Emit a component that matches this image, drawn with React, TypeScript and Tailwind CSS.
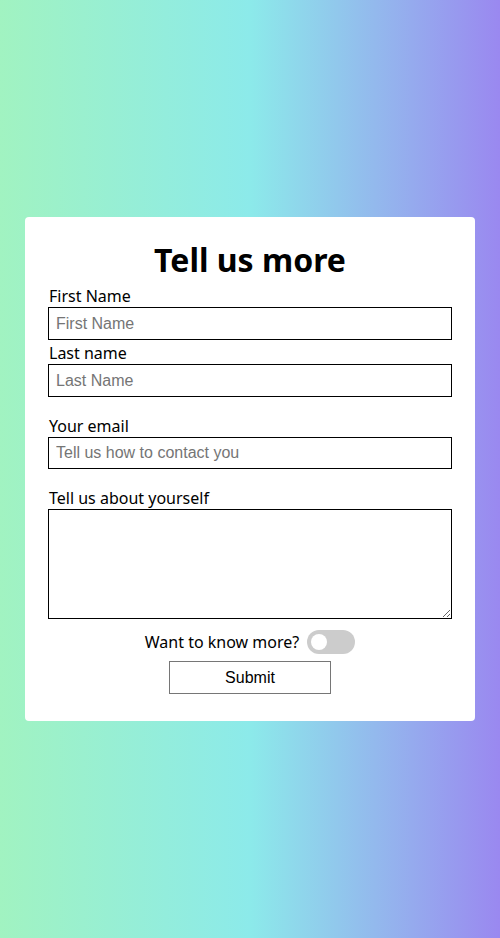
import React, { useState } from "react";

export default function App() {
  const [more, setMore] = useState(false);

  return (
    <div
      className="w-full min-h-[938px] flex items-center justify-center bg-[linear-gradient(to_right,#a1f3c1_0%,#8ceaea_50%,#9a88f0_100%)]"
      style={{ fontFamily: '"Noto Sans", sans-serif' }}
    >
      <form className="w-[450px] bg-white rounded-[4px] px-[23px] pt-[23px] pb-[27px] flex flex-col text-black">
        <h1 className="text-center text-[32px] font-bold leading-[40px] mb-[5px]">Tell us more</h1>

        {/* Name fields */}
        <label className="text-[16px] leading-[22px] pl-px">First Name</label>
        <input
          placeholder="First Name"
          className="h-[33px] border border-black px-[7px] text-[16px] placeholder:text-[#757575] font-['Liberation_Sans',Arial,sans-serif] outline-none"
        />
        <label className="text-[16px] leading-[22px] mt-[2px] pl-px">Last name</label>
        <input
          placeholder="Last Name"
          className="h-[33px] border border-black px-[7px] text-[16px] placeholder:text-[#757575] font-['Liberation_Sans',Arial,sans-serif] outline-none"
        />

        <label className="text-[16px] leading-[22px] mt-[18px] pl-px">Your email</label>
        <input
          type="email"
          placeholder="Tell us how to contact you"
          className="h-[32px] border border-black px-[7px] text-[16px] placeholder:text-[#757575] font-['Liberation_Sans',Arial,sans-serif] outline-none"
        />

        <label className="text-[16px] leading-[22px] mt-[18px] pl-px">Tell us about yourself</label>
        <textarea className="h-[110px] border border-black px-[7px] py-[4px] text-[16px] font-['Liberation_Sans',Arial,sans-serif] outline-none" />

        {/* Toggle */}
        <div className="flex items-center justify-center gap-[8px] mt-[11px]">
          <span className="text-[16px] leading-[22px]">Want to know more?</span>
          <button
            type="button"
            onClick={() => setMore(!more)}
            className={`relative w-[48px] h-[24px] rounded-full ${more ? "bg-[#2196f3]" : "bg-[#cccccc]"}`}
          >
            <span
              className={`absolute top-[4px] w-[16px] h-[16px] rounded-full bg-white ${more ? "left-[28px]" : "left-[4px]"}`}
            />
          </button>
        </div>

        <div className="flex justify-center mt-[7px]">
          <button
            type="button"
            className="w-[162px] h-[33px] border border-[#767676] bg-white text-[16px] font-['Liberation_Sans',Arial,sans-serif]"
          >
            Submit
          </button>
        </div>
      </form>
    </div>
  );
}
